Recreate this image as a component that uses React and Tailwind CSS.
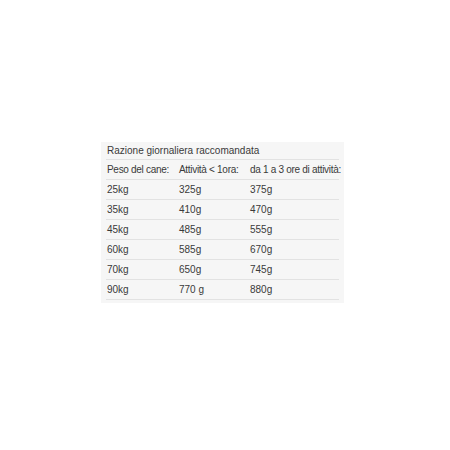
export default function App() {
  const rows = [
    ["25kg", "325g", "375g"],
    ["35kg", "410g", "470g"],
    ["45kg", "485g", "555g"],
    ["60kg", "585g", "670g"],
    ["70kg", "650g", "745g"],
    ["90kg", "770 g", "880g"],
  ];

  return (
    <div className="flex h-[450px] w-[450px] items-start bg-white pl-[101px] pt-[142px] font-['Liberation_Sans',sans-serif] text-[10px] text-[#3a3a3a]">
      <div className="w-[243px] bg-[#f6f6f6] px-[5px] pb-[3px]">
        <div className="flex h-[18px] items-center whitespace-nowrap border-b border-[#e2e2e2] pl-px">
          Razione giornaliera raccomandata
        </div>
        <div className="grid h-[20px] grid-cols-[72px_71px_1fr] items-center whitespace-nowrap border-b border-[#e2e2e2] pl-px tracking-[-0.3px]">
          <span>Peso del cane:</span>
          <span>Attività &lt; 1ora:</span>
          <span>da 1 a 3 ore di attività:</span>
        </div>
        {rows.map((row) => (
          <div
            key={row[0]}
            className="grid h-[20px] grid-cols-[72px_71px_1fr] items-center whitespace-nowrap border-b border-[#e2e2e2] pl-px"
          >
            {row.map((cell, i) => (
              <span key={i}>{cell}</span>
            ))}
          </div>
        ))}
      </div>
    </div>
  );
}
